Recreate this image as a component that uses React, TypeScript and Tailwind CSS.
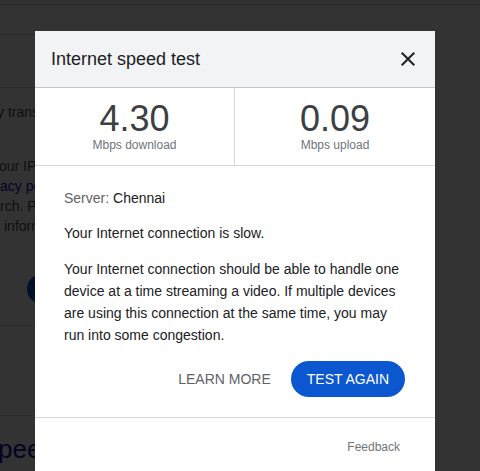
import React from 'react';

const font = { fontFamily: '"Liberation Sans", Arial, sans-serif' };

function CloseIcon() {
  return (
    <svg viewBox="0 0 24 24" className="w-6 h-6" fill="#202124">
      <path d="M19 6.41L17.59 5 12 10.59 6.41 5 5 6.41 10.59 12 5 17.59 6.41 19 12 13.41 17.59 19 19 17.59 13.41 12z" />
    </svg>
  );
}

function Stat({ value, label }: { value: string; label: string }) {
  return (
    <div className="flex flex-col items-center pt-[13px]">
      <div className="text-[36px] leading-[36px] text-[#3c4043]">{value}</div>
      <div className="text-[12px] leading-[14px] text-[#70757a] mt-[1px]">{label}</div>
    </div>
  );
}

// page under the dim layer, only its left edge shows
function BackPage() {
  return (
    <div className="w-[480px] h-[471px] bg-white overflow-hidden">
      <div className="h-[5px] bg-[#f1f3f4] border-b border-[#c0c0c0]" />
      <div className="w-[300px] h-[30px] border-b border-[#dadce0]" />
      <div className="w-[300px] h-[53px] border-b border-[#dadce0]" />
      <div className="w-[35px] overflow-hidden whitespace-nowrap text-[14px] leading-[20px] text-[#4d5156] pt-[14px]">
        <div className="-ml-[3px]">y transfer</div>
        <div className="h-[34px]" />
        <div className="-ml-[8px]">your IP</div>
        <div className="text-[#1a0dab]">acy policy</div>
        <div>rch. Please</div>
        <div className="pl-[4px]">information</div>
      </div>
      <div className="pl-[27px] pt-[38px]">
        <div className="w-[100px] h-[30px] rounded-full bg-[#0b57d0]" />
      </div>
      <div className="w-[300px] h-[22px] border-b border-[#dadce0]" />
      <div className="w-[300px] h-[90px] border-b border-[#dadce0]" />
      <div className="w-[35px] overflow-hidden whitespace-nowrap pt-[16px] text-[26px] leading-[34px] text-[#1a0dab]">
        <div className="-ml-[2px]">peed</div>
      </div>
    </div>
  );
}

export default function App() {
  return (
    <div className="relative w-[480px] h-[471px] overflow-hidden" style={font}>
      <BackPage />
      <div className="absolute inset-0 bg-black/80" />
      <div className="absolute left-[35px] top-[31px] w-[400px] h-[460px] bg-white">
        <div className="h-[57px] bg-[#f1f3f4] border-b border-[#c6c6c6] flex items-center justify-between pl-4 pr-[15px]">
          <h2 className="text-[18px] text-[#202124]">Internet speed test</h2>
          <CloseIcon />
        </div>
        <div className="grid grid-cols-2 h-[78px] border-b border-[#d6d6d6]">
          <div className="border-r border-[#d6d6d6]">
            <Stat value="4.30" label="Mbps download" />
          </div>
          <Stat value="0.09" label="Mbps upload" />
        </div>
        <div className="pl-[29px] pr-[29px] pt-[21px] text-[14px] leading-[22px] text-[#202124]">
          <p>
            <span className="text-[#5f6368]">Server: </span>Chennai
          </p>
          <p className="mt-[13px]">Your Internet connection is slow.</p>
          <p className="mt-[14px]">
            Your Internet connection should be able to handle one device at a time streaming a video. If multiple
            devices are using this connection at the same time, you may run into some congestion.
          </p>
        </div>
        <div className="flex items-center justify-end gap-5 pr-[30px] mt-[15px] h-[36px]">
          <button className="text-[14px] text-[#5f6368] uppercase">Learn more</button>
          <button className="h-[36px] px-4 rounded-full bg-[#0b57d0] text-white text-[14px]">TEST AGAIN</button>
        </div>
        <div className="mt-[20px] border-t border-[#d6d6d6] flex justify-end pr-[35px] pt-[20px]">
          <span className="text-[12px] text-[#70757a]">Feedback</span>
        </div>
      </div>
    </div>
  );
}
